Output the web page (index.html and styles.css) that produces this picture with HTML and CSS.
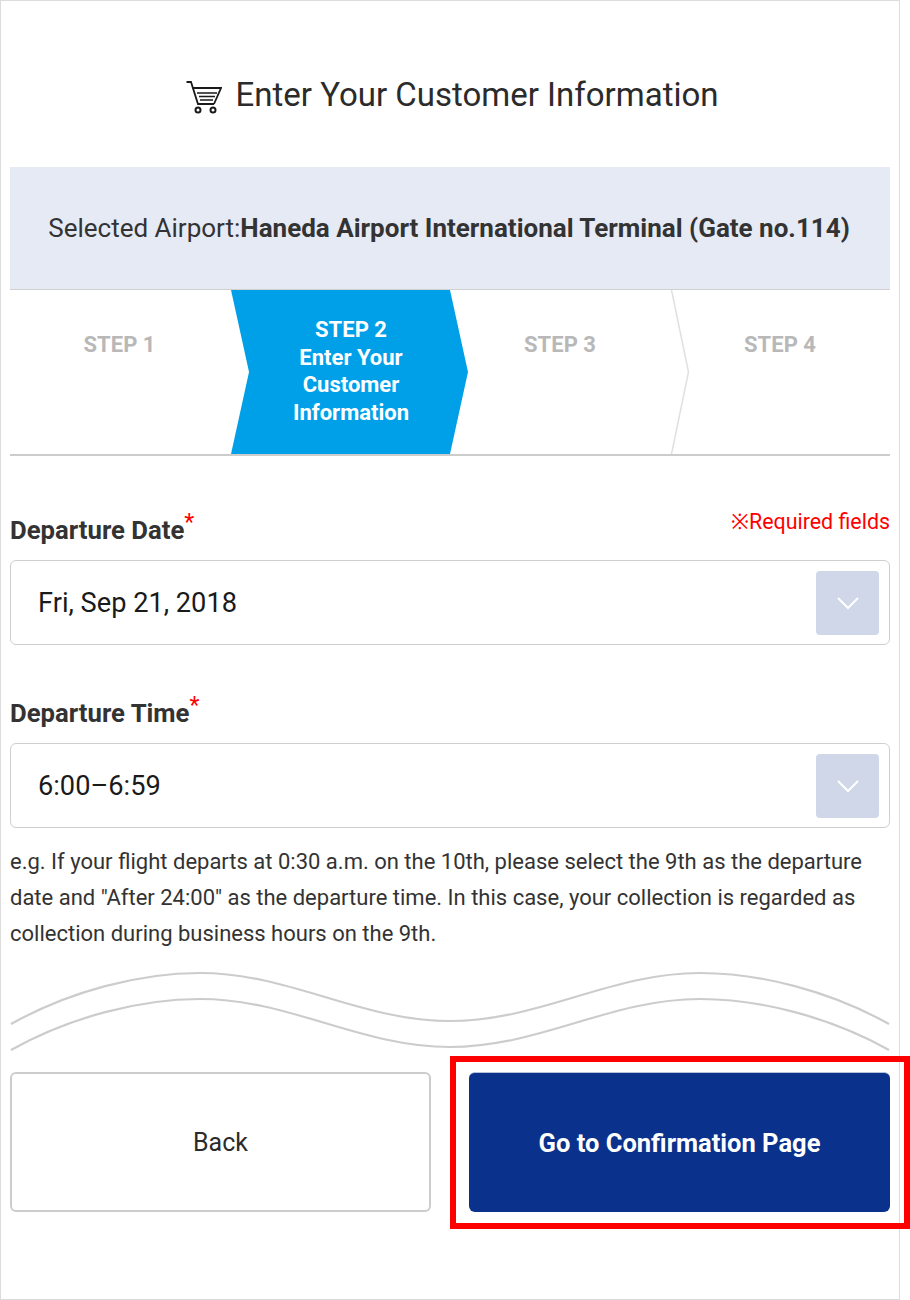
FILE: index.html
```html
<!DOCTYPE html>
<html lang="en">
<head>
<meta charset="utf-8">
<title>Enter Your Customer Information</title>
<link rel="stylesheet" href="styles.css">
</head>
<body>
<main class="frame">
  <h1 class="title">
    <svg class="cart" viewBox="0 0 36 33" width="36" height="33" aria-hidden="true">
      <path d="M0.5 1H5L12 23H28" fill="none" stroke="#1a1a1a" stroke-width="1.8"/>
      <path d="M6.5 7H35L28 23" fill="none" stroke="#1a1a1a" stroke-width="1.8"/>
      <path d="M11 12H31M13 15.5H29M14 19H27" fill="none" stroke="#1a1a1a" stroke-width="1.5"/>
      <circle cx="12" cy="29" r="2.5" fill="none" stroke="#1a1a1a" stroke-width="2"/>
      <circle cx="27" cy="29" r="2.5" fill="none" stroke="#1a1a1a" stroke-width="2"/>
    </svg>
    <span>Enter Your Customer Information</span>
  </h1>
  <div class="banner">Selected Airport:<strong>Haneda Airport International Terminal (Gate no.114)</strong></div>
  <ol class="steps">
    <li class="step">STEP 1</li>
    <li class="step step-active">STEP 2<br>Enter Your<br>Customer<br>Information</li>
    <li class="step">STEP 3</li>
    <li class="step step-last">
      <svg class="step-sep" viewBox="0 0 20 164" width="20" height="164" aria-hidden="true"><path d="M1.5 0L18.5 82L1.5 164" fill="none" stroke="#e0e0e0" stroke-width="1.5"/></svg>
      STEP 4
    </li>
  </ol>
  <section class="form">
    <div class="label-row">
      <label class="label">Departure Date<span class="star">*</span></label>
      <span class="required">※Required fields</span>
    </div>
    <div class="select">
      <span>Fri, Sep 21, 2018</span>
      <span class="select-btn"><svg viewBox="0 0 24 14" width="24" height="14" aria-hidden="true"><path d="M2 2l10 10L22 2" fill="none" stroke="#fff" stroke-width="2"/></svg></span>
    </div>
    <div class="label-row label-row-second">
      <label class="label">Departure Time<span class="star">*</span></label>
    </div>
    <div class="select">
      <span>6:00–6:59</span>
      <span class="select-btn"><svg viewBox="0 0 24 14" width="24" height="14" aria-hidden="true"><path d="M2 2l10 10L22 2" fill="none" stroke="#fff" stroke-width="2"/></svg></span>
    </div>
    <p class="note">e.g. If your flight departs at 0:30 a.m. on the 10th, please select the 9th as the departure date and "After 24:00" as the departure time. In this case, your collection is regarded as collection during business hours on the 9th.</p>
  </section>
  <svg class="wave" viewBox="0 0 880 82" width="880" height="82" aria-hidden="true">
    <path d="M1 53C60 20 130 2 190 2C280 2 350 50 440 50C530 50 600 2 690 2C750 2 820 20 879 53" fill="none" stroke="#cccccc" stroke-width="2.2"/>
    <path d="M1 79C60 46 130 28 190 28C280 28 350 76 440 76C530 76 600 28 690 28C750 28 820 46 879 79" fill="none" stroke="#cccccc" stroke-width="2.2"/>
  </svg>
  <div class="actions">
    <a class="btn btn-back">Back</a>
    <a class="btn btn-next">Go to Confirmation Page</a>
  </div>
  <div class="highlight"></div>
</main>
</body>
</html>
```
FILE: styles.css
```css
* { box-sizing: border-box; }
html, body { margin: 0; padding: 0; background: #fff; }
body { font-family: Roboto, "Liberation Sans", sans-serif; color: #2b2b2b; }
.frame {
  position: relative;
  width: 900px;
  height: 1300px;
  border: 1px solid #dcdcdc;
  padding: 0 9px;
  overflow: visible;
}
.title {
  height: 166px;
  margin: 0;
  display: flex;
  align-items: center;
  justify-content: center;
  gap: 13px;
  padding: 20px 0 0 5px;
  font-size: 33px;
  font-weight: 400;
  color: #2b2b2b;
}
.cart { flex: none; margin-top: 7px; }
.banner {
  height: 123px;
  background: #e6eaf5;
  border-bottom: 1px solid #d0d0d0;
  display: flex;
  align-items: center;
  justify-content: center;
  padding-right: 2px;
  font-size: 26px;
  color: #333;
  white-space: nowrap;
}
.banner strong { font-weight: 700; }
.steps {
  list-style: none;
  margin: 0;
  padding: 0;
  height: 166px;
  display: flex;
  border-bottom: 2px solid #cccccc;
}
.step {
  position: relative;
  width: 220px;
  flex: none;
  padding-top: 41px;
  text-align: center;
  font-size: 22px;
  line-height: 27.5px;
  font-weight: 700;
  color: #b8b8b8;
}
.step:first-child { width: 219px; }
.step-active {
  width: 237px;
  margin-left: 2px;
  margin-right: -18px;
  padding-top: 26px;
  padding-left: 3px;
  color: #fff;
  background: #00a0e9;
  clip-path: polygon(0 0, 219px 0, 100% 50%, 219px 100%, 0 100%, 18px 50%);
  z-index: 1;
}
.step-sep { position: absolute; left: 0; top: 0; }
.form { padding-top: 50px; }
.label-row {
  height: 54px;
  display: flex;
  justify-content: space-between;
  align-items: flex-start;
}
.label-row-second { height: 51px; margin-top: 47px; }
.label {
  font-size: 25.7px;
  line-height: 32px;
  font-weight: 700;
  color: #333;
  margin-top: 8px;
}
.label-row-second .label { margin-top: 5px; }
.star {
  color: #ff0000;
  font-weight: 400;
  font-size: 23px;
  position: relative;
  top: -9px;
  line-height: 0;
}
.required { font-size: 21.4px; line-height: 26px; color: #ff0000; margin-top: 3px; }
.select {
  height: 85px;
  border: 1px solid #cfcfcf;
  border-radius: 6px;
  display: flex;
  align-items: center;
  justify-content: space-between;
  padding: 0 10px 0 27px;
  font-size: 27.2px;
  color: #1a1a1a;
  background: #fff;
}
.select-btn {
  width: 63px;
  height: 64px;
  border-radius: 4px;
  background: #cfd7e9;
  display: flex;
  align-items: center;
  justify-content: center;
}
.note {
  margin: 16px 0 0;
  font-size: 22px;
  line-height: 36px;
  color: #333;
}
.wave { display: block; margin-top: 19px; }
.actions {
  display: flex;
  justify-content: space-between;
  margin-top: 19px;
}
.btn {
  width: 421px;
  height: 140px;
  border-radius: 6px;
  display: flex;
  align-items: center;
  justify-content: center;
  font-size: 25px;
}
.btn-back { border: 2px solid #cccccc; color: #2b2b2b; background: #fff; }
.btn-next { background: #0a318c; color: #fff; font-weight: 700; font-size: 25.5px; border-top: 1px solid #b8c2dc; }
.highlight {
  position: absolute;
  left: 449px;
  top: 1055px;
  width: 460px;
  height: 173px;
  border: 6px solid #ff0000;
  pointer-events: none;
}
```
